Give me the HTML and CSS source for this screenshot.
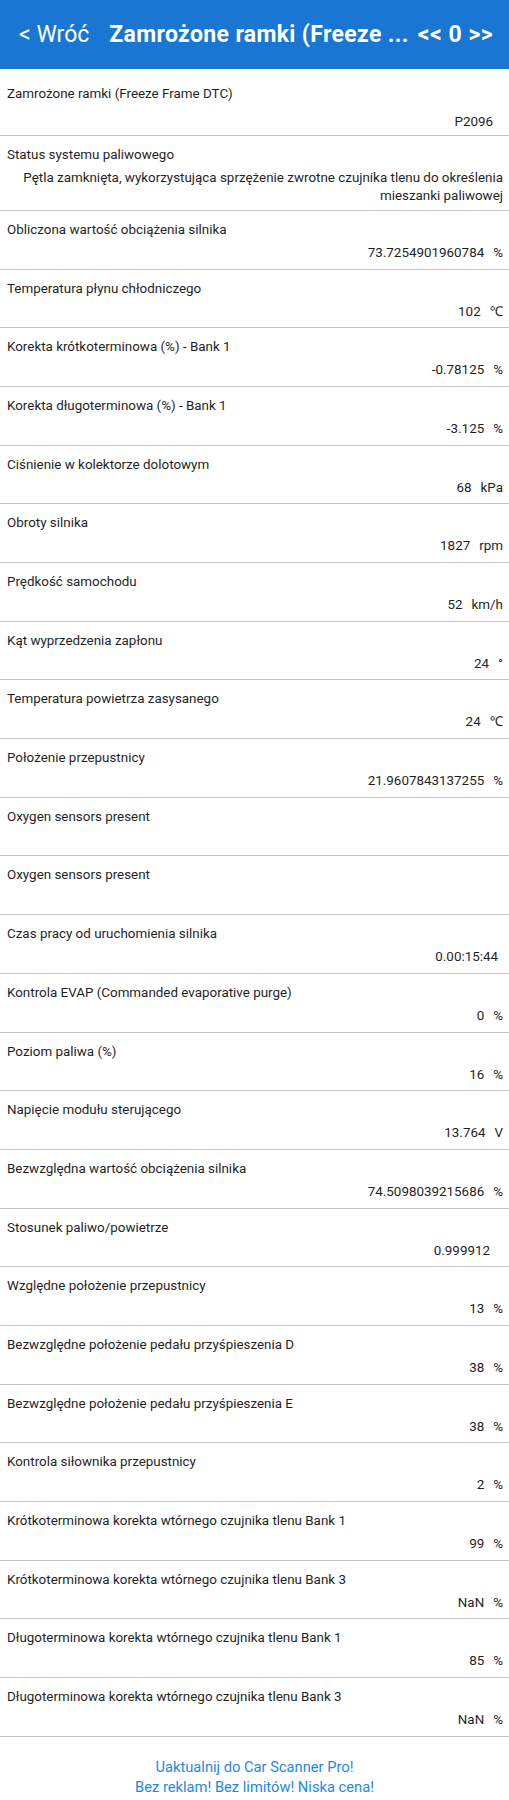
FILE: index.html
```html
<!DOCTYPE html>
<html lang="pl">
<head>
<meta charset="utf-8">
<title>Zamrożone ramki</title>
<link rel="stylesheet" href="styles.css">
</head>
<body>
<header class="topbar">
  <span class="back">&lt; Wróć</span>
  <span class="title">Zamrożone ramki (Freeze ...</span>
  <span class="pager">&lt;&lt; 0 &gt;&gt;</span>
</header>
<main class="list">
  <div class="row row-code"><div class="label">Zamrożone ramki (Freeze Frame DTC)</div><div class="value"><span class="num">P2096</span><span class="spacer-m"></span></div></div>
  <div class="row row-multi"><div class="label">Status systemu paliwowego</div><div class="value"><span class="num">Pętla zamknięta, wykorzystująca sprzężenie zwrotne czujnika tlenu do określenia mieszanki paliwowej</span></div></div>
  <div class="row"><div class="label">Obliczona wartość obciążenia silnika</div><div class="value"><span class="num">73.7254901960784</span><span class="unit">%</span></div></div>
  <div class="row"><div class="label">Temperatura płynu chłodniczego</div><div class="value"><span class="num">102</span><span class="unit">℃</span></div></div>
  <div class="row"><div class="label">Korekta krótkoterminowa (%) - Bank 1</div><div class="value"><span class="num">-0.78125</span><span class="unit">%</span></div></div>
  <div class="row"><div class="label">Korekta długoterminowa (%) - Bank 1</div><div class="value"><span class="num">-3.125</span><span class="unit">%</span></div></div>
  <div class="row"><div class="label">Ciśnienie w kolektorze dolotowym</div><div class="value"><span class="num">68</span><span class="unit">kPa</span></div></div>
  <div class="row"><div class="label">Obroty silnika</div><div class="value"><span class="num">1827</span><span class="unit">rpm</span></div></div>
  <div class="row"><div class="label">Prędkość samochodu</div><div class="value"><span class="num">52</span><span class="unit">km/h</span></div></div>
  <div class="row"><div class="label">Kąt wyprzedzenia zapłonu</div><div class="value"><span class="num">24</span><span class="unit">°</span></div></div>
  <div class="row"><div class="label">Temperatura powietrza zasysanego</div><div class="value"><span class="num">24</span><span class="unit">℃</span></div></div>
  <div class="row"><div class="label">Położenie przepustnicy</div><div class="value"><span class="num">21.9607843137255</span><span class="unit">%</span></div></div>
  <div class="row"><div class="label">Oxygen sensors present</div><div class="value"><span class="num">&nbsp;</span></div></div>
  <div class="row"><div class="label">Oxygen sensors present</div><div class="value"><span class="num">&nbsp;</span></div></div>
  <div class="row"><div class="label">Czas pracy od uruchomienia silnika</div><div class="value"><span class="num">0.00:15:44</span><span class="spacer-s"></span></div></div>
  <div class="row"><div class="label">Kontrola EVAP (Commanded evaporative purge)</div><div class="value"><span class="num">0</span><span class="unit">%</span></div></div>
  <div class="row"><div class="label">Poziom paliwa (%)</div><div class="value"><span class="num">16</span><span class="unit">%</span></div></div>
  <div class="row"><div class="label">Napięcie modułu sterującego</div><div class="value"><span class="num">13.764</span><span class="unit">V</span></div></div>
  <div class="row"><div class="label">Bezwzględna wartość obciążenia silnika</div><div class="value"><span class="num">74.5098039215686</span><span class="unit">%</span></div></div>
  <div class="row"><div class="label">Stosunek paliwo/powietrze</div><div class="value"><span class="num">0.999912</span><span class="spacer-l"></span></div></div>
  <div class="row"><div class="label">Względne położenie przepustnicy</div><div class="value"><span class="num">13</span><span class="unit">%</span></div></div>
  <div class="row"><div class="label">Bezwzględne położenie pedału przyśpieszenia D</div><div class="value"><span class="num">38</span><span class="unit">%</span></div></div>
  <div class="row"><div class="label">Bezwzględne położenie pedału przyśpieszenia E</div><div class="value"><span class="num">38</span><span class="unit">%</span></div></div>
  <div class="row"><div class="label">Kontrola siłownika przepustnicy</div><div class="value"><span class="num">2</span><span class="unit">%</span></div></div>
  <div class="row"><div class="label">Krótkoterminowa korekta wtórnego czujnika tlenu Bank 1</div><div class="value"><span class="num">99</span><span class="unit">%</span></div></div>
  <div class="row"><div class="label">Krótkoterminowa korekta wtórnego czujnika tlenu Bank 3</div><div class="value"><span class="num">NaN</span><span class="unit">%</span></div></div>
  <div class="row"><div class="label">Długoterminowa korekta wtórnego czujnika tlenu Bank 1</div><div class="value"><span class="num">85</span><span class="unit">%</span></div></div>
  <div class="row"><div class="label">Długoterminowa korekta wtórnego czujnika tlenu Bank 3</div><div class="value"><span class="num">NaN</span><span class="unit">%</span></div></div>
</main>
<footer class="promo">
  <div>Uaktualnij do Car Scanner Pro!</div>
  <div>Bez reklam! Bez limitów! Niska cena!</div>
</footer>
</body>
</html>
```
FILE: styles.css
```css
html, body {
  margin: 0;
  padding: 0;
  background: #ffffff;
}
body {
  font-family: Roboto, "Noto Sans", "Liberation Sans", sans-serif;
  color: #1f1f1f;
  width: 509px;
}
.topbar {
  height: 69px;
  background: #1976d2;
  color: #ffffff;
  display: flex;
  align-items: center;
  padding: 0 0 0 19px;
  font-size: 23px;
  white-space: nowrap;
  box-sizing: border-box;
}
.back {
  font-weight: 400;
  margin-right: 20px;
}
.title {
  font-weight: 700;
  letter-spacing: 0.35px;
  margin-right: 9px;
}
.pager {
  font-weight: 700;
  letter-spacing: 0.5px;
}
.list {
  padding-top: 6px;
}
.row {
  padding: 9px 6px 6.2px 7px;
  border-bottom: 1px solid #c4c4c4;
}
.row-code .value {
  margin-top: 9px;
}
.row-code {
  padding-bottom: 3.2px;
}
.row-multi {
  padding-bottom: 4.2px;
}
.label {
  font-size: 13.4px;
  line-height: 20px;
}
.value {
  margin-top: 4px;
  font-size: 13.4px;
  line-height: 18.5px;
  text-align: right;
}
.unit {
  margin-left: 9px;
}
.spacer-s {
  display: inline-block;
  width: 5px;
}
.spacer-m {
  display: inline-block;
  width: 10px;
}
.spacer-l {
  display: inline-block;
  width: 13px;
}
.promo {
  padding-top: 20px;
  text-align: center;
  color: #1e88e5;
  font-size: 14.7px;
  line-height: 20.5px;
}
```
